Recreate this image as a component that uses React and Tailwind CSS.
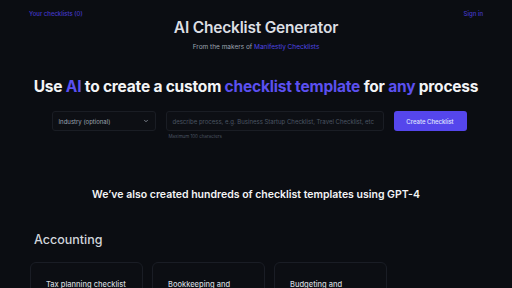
import React from "react";

const cards = [
  "Tax planning checklist",
  "Bookkeeping and",
  "Budgeting and",
];

const App = () => {
  return (
    <div
      className="min-h-screen w-full overflow-hidden bg-[#0b0d12] text-white"
      style={{ fontFamily: "Inter, 'Liberation Sans', sans-serif" }}
    >
      {/* top nav */}
      <header className="flex items-center justify-between px-[29px] pt-[10px] text-[6px] leading-[8px] font-medium text-[#4338ca]">
        <span>Your checklists (0)</span>
        <span>Sign in</span>
      </header>

      <div className="mt-0 text-center">
        <h1 className="text-[15.5px] leading-[20px] font-semibold tracking-[-0.2px] text-[#dcdee3]">
          AI Checklist Generator
        </h1>
        <p className="mt-[5px] text-[6.5px] leading-[8px] text-[#9ca3af]">
          From the makers of <span className="text-[#4f46e5]">Manifestly Checklists</span>
        </p>
      </div>

      <h2 className="mt-[26px] text-center text-[15.5px] leading-[20px] font-bold tracking-[-0.2px] text-[#f3f4f6]">
        Use <span className="text-[#5b50f0]">AI</span> to create a custom{" "}
        <span className="text-[#5b50f0]">checklist template</span> for{" "}
        <span className="text-[#5b50f0]">any</span> process
      </h2>

      {/* form row */}
      <div className="mt-[14px] flex items-start justify-center gap-[10px] pl-[6px]">
        <div className="flex h-[20px] w-[104px] items-center justify-between rounded-[3px] border border-[#1a1d24] bg-[#0d0f14] px-[6px] text-[6px] text-[#9ca3af]">
          <span>Industry (optional)</span>
          <svg width="6" height="6" viewBox="0 0 24 24" fill="none" stroke="#9ca3af" strokeWidth="3" strokeLinecap="round" strokeLinejoin="round">
            <path d="m6 9 6 6 6-6" />
          </svg>
        </div>
        <div className="flex flex-col">
          <div className="flex h-[20px] w-[218px] items-center rounded-[3px] border border-[#1a1d24] bg-[#0d0f14] px-[6px] text-[6px] text-[#4b5563]">
            describe process, e.g. Business Startup Checklist, Travel Checklist, etc
          </div>
          <span className="mt-[3px] pl-[3px] text-[4.5px] leading-[6px] text-[#4b5563]">
            Maximum 100 characters
          </span>
        </div>
        <button className="flex h-[20px] w-[73px] items-center justify-center rounded-[3px] bg-[#5546ec] text-[6px] font-medium text-[#e0e7ff]">
          Create Checklist
        </button>
      </div>

      <h3 className="mt-[48px] text-center text-[10.5px] leading-[14px] font-semibold text-[#f3f4f6]">
        We’ve also created hundreds of checklist templates using GPT-4
      </h3>

      <h4 className="mt-[30px] pl-[34px] text-[12.5px] leading-[16px] font-medium text-[#d1d5db]">
        Accounting
      </h4>

      <div className="mt-[14px] flex gap-[9px] pl-[30px]">
        {cards.map((c) => (
          <div
            key={c}
            className="h-[60px] w-[113px] rounded-[6px] border border-[#1a1d25] bg-[#0c0e13] px-[15px] pt-[17px] text-[7.5px] leading-[10px] font-medium text-[#d1d5db]"
          >
            {c}
          </div>
        ))}
      </div>
    </div>
  );
};

export default App;
